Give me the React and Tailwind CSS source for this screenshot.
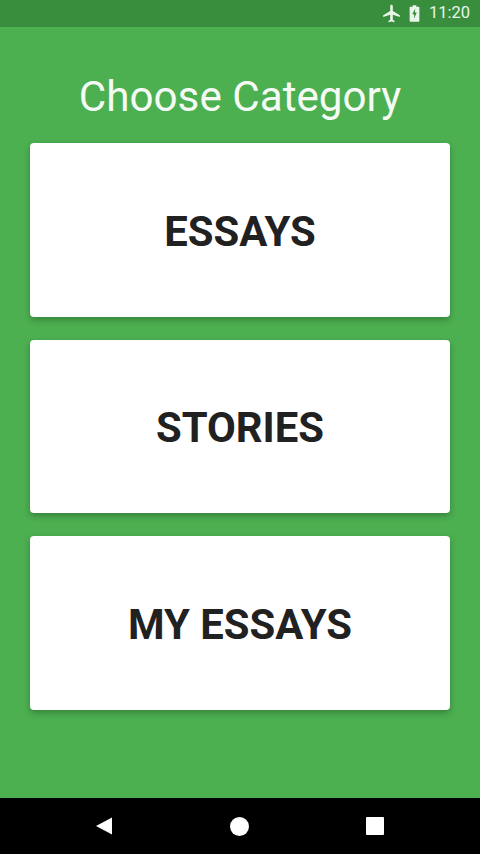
export default function App() {
  return (
    <div className="w-[480px] h-[854px] flex flex-col bg-[#4caf50] font-['Roboto',sans-serif]">
      <div className="h-[27px] bg-[#388e3c] flex items-center justify-end pr-[10px] text-[#e8f5e9]">
        <svg width="21" height="21" viewBox="0 0 24 24" fill="currentColor" className="mr-[7px]">
          <path d="M21 16v-2l-8-5V3.500C13 2.670 12.330 2 11.500 2S10 2.670 10 3.500V9l-8 5v2l8-2.500V19l-2 1.500V22l3.500-1 3.500 1v-1.500L13 19v-5.500l8 2.500z" transform="translate(.5 0)" />
        </svg>
        <svg width="11" height="17" viewBox="0 0 12 18" className="mr-[9px]">
          <path fill="currentColor" d="M4 0h4v1.500h2.500a.8.8 0 0 1 .8.8v14.900a.8.8 0 0 1-.8.8h-9a.8.8 0 0 1-.8-.8V2.300a.8.8 0 0 1 .8-.8H4z" />
          <path fill="#388e3c" d="M6.800 3.500 3.500 9.800h2v4.700l3-6.500h-2z" />
        </svg>
        <span className="text-[16.500px] font-normal leading-none">11:20</span>
      </div>
      <h1 className="h-[116px] pt-[45px] text-center text-[42.200px] leading-[49px] text-[#f4faf4] font-normal">Choose Category</h1>
      <div className="flex flex-col gap-[23px] px-[30px]">
        {["ESSAYS", "STORIES", "MY ESSAYS"].map((t) => (
          <div key={t} className="h-[173.500px] rounded-[4px] bg-white flex items-center justify-center pt-[4px] shadow-[0_3px_6px_rgba(0,0,0,0.25)]">
            <span className="text-[41.800px] font-bold text-[#212121] leading-none">{t}</span>
          </div>
        ))}
      </div>
      <div className="flex-1" />
      <div className="h-[56px] bg-black flex items-center justify-between pl-[95px] pr-[96px]">
        <svg width="18" height="20" viewBox="0 0 18 20"><path d="M1 10 17 1.500v17z" fill="#fff" /></svg>
        <div className="w-[19px] h-[19px] rounded-full bg-white" />
        <div className="w-[18px] h-[18px] rounded-[1px] bg-white" />
      </div>
    </div>
  );
}
